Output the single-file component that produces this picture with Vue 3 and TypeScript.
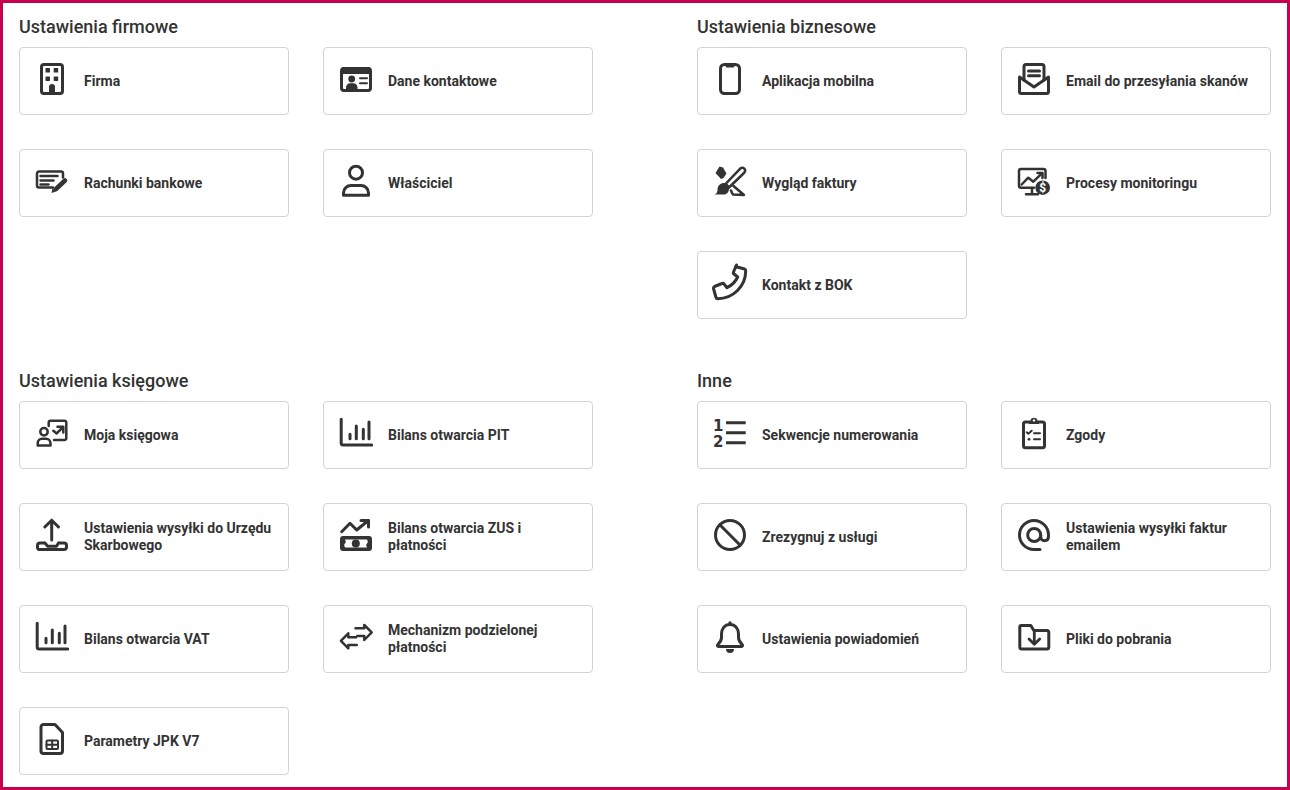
<script setup lang="ts">
interface Item { label: string; icon: string }
interface Section { title: string; items: Item[] }

const F = 'fill="currentColor" stroke="none"'
const icons: Record<string, string> = {
  firma: `<rect x="5.5" y="1.5" width="21" height="29" rx="2.5"/><g ${F}><rect x="9.5" y="5" width="4.5" height="4.5" rx=".6"/><rect x="17.7" y="5" width="4.5" height="4.5" rx=".6"/><rect x="9.5" y="13.4" width="4.5" height="4.5" rx=".6"/><rect x="17.7" y="13.4" width="4.5" height="4.5" rx=".6"/><path d="M13 31v-7a3 3 0 0 1 6 0v7z"/></g>`,
  kontakt: `<rect x="1.5" y="5.5" width="29" height="22" rx="2.5"/><path ${F} d="M1 7a3 3 0 0 1 3-3h24a3 3 0 0 1 3 3v4H1z"/><g ${F}><circle cx="11.7" cy="16" r="3.4"/><path d="M6 29v-4.5c0-2.5 2-4.2 4-4.2h3.500c2 0 4 1.700 4 4.200V29z"/></g><path stroke-width="2" d="M20 15.300h7M20 20.300h7"/>`,
  rachunki: `<path stroke-width="2.500" d="M17 22.500H3a2 2 0 0 1-2-2v-12a2 2 0 0 1 2-2h22a2 2 0 0 1 2 2v4"/><path stroke-width="2.500" d="M4.500 11h17M4.500 15.500h13M4.500 19.500h8"/><path stroke-width="4.500" d="M20 24l9-8.500"/><path ${F} d="M15.500 28l1-5 3.500 3.500z"/>`,
  osoba: `<circle cx="16" cy="7.700" r="6.500"/><path d="M3.500 30.200V28c0-4.500 3.500-7.500 7.500-7.500h10c4 0 7.500 3 7.500 7.500v2.200z"/>`,
  mobile: `<rect x="6.500" y="1.500" width="19" height="29" rx="4"/><path ${F} d="M11.500 1h9v2a1.500 1.500 0 0 1-1.500 1.500h-6A1.500 1.500 0 0 1 11.500 3z"/>`,
  email: `<path d="M6 17V3.500a2 2 0 0 1 2-2h16a2 2 0 0 1 2 2V17"/><path d="M10.500 8h11M10.500 12.700h11"/><path d="M1.500 14v14.500a2 2 0 0 0 2 2h25a2 2 0 0 0 2-2V14L16 24z"/>`,
  wyglad: `<path ${F} d="M5.500 1.500l3.500 1 3.500 6-3 4.500-2.500 1L1.500 8z"/><path stroke-width="2.500" d="M30.500 3.800c-1.500-1.500-3-1.300-4.500 0L11.500 19l3.500 3.500L30 8c1.200-1.400 1.800-2.700.500-4.200z"/><path ${F} d="M7.500 18.500c3-1 5.500-.5 7 2 1.500 3 .5 7.500-3.500 9H0.500c2.500-1 3-2.500 3-5 0-3 1.500-5 4-6z"/><path stroke-width="2.500" d="M19.500 21l10.500 9-11-.5c-.8-1-1.500-2.500-2-4"/>`,
  proces: `<path stroke-width="2.500" d="M16 22.800H3a2 2 0 0 1-2-2V6a2 2 0 0 1 2-2h22.500a2 2 0 0 1 2 2v7"/><path stroke-width="2.500" d="M14 23v6M8 29.200h12"/><path stroke-width="2.500" d="M3.700 19.500l6.600-6.800 5 4 8.400-8"/><path stroke-width="2.500" d="M19.500 8h5v5"/><circle ${F} cx="24.700" cy="22.700" r="7.300"/><text x="24.700" y="27" text-anchor="middle" fill="#fff" stroke="none" font-family="Roboto" font-weight="700" font-size="12">$</text>`,
  telefon: `<path d="M21.500-.5L30.500 2c.8.300 1.200 1 1.200 1.700 0 15.500-12.500 28-28 28-.8 0-1.500-.5-1.700-1.200L-.500 21.500c-.2-.8.200-1.600 1-2l7.500-3c.7-.3 1.500-.1 2 .5l3 3.700c4.800-2.300 8.500-6 10.700-10.700L20 7c-.6-.5-.8-1.300-.5-2l3-7"/>`,
  ksiegowa: `<path stroke-width="2.500" d="M12.700 9V5.500a1.800 1.800 0 0 1 1.800-1.800h14a1.800 1.800 0 0 1 1.800 1.800v15.700a1.800 1.800 0 0 1-1.800 1.800H18"/><circle stroke-width="2.500" cx="8" cy="14.700" r="3.700"/><path stroke-width="2.500" d="M1.700 28.500v-2.200c0-2.500 1.800-4.600 4.300-4.600h4c2.500 0 4.500 2.100 4.500 4.600v2.200z"/><path stroke-width="2.500" d="M17.300 13.700l3.400 2.700 6.400-6.400M21.500 9.800h5.800v5.800"/>`,
  bilans: `<path d="M1.200 2.300V26a2 2 0 0 0 2 2h28.500"/><path d="M10 17.300v4.500M16.300 9v12.800M23.300 12.300v9.500M29 5v16.800"/>`,
  upload: `<path d="M15.700 21V1.500M8.800 8l6.900-6.800L22.500 8"/><path d="M9 24H4a2.500 2.500 0 0 0-2.500 2.500v2.200A2 2 0 0 0 4 30.500h24a2.500 2.500 0 0 0 2.500-2.500v-1.500A2.500 2.500 0 0 0 28 24h-5.500M9 24l2.500 3.200h9L22.500 24"/>`,
  zus: `<path stroke-width="3" d="M1.700 12.700l8.300-8.400 6.700 6.700L28.300 1.500"/><path stroke-width="3" d="M21 1.500h7.500V8"/><path ${F} d="M3 17h26a3 3 0 0 1 3 3v9a3 3 0 0 1-3 3H3a3 3 0 0 1-3-3v-9a3 3 0 0 1 3-3z"/><path stroke="none" fill="#fff" d="M5 20.500h22c.6 1.700 1.500 2.500 0 4-1.500 1.500-.6 2.300 0 4H5c-.6-1.700-1.500-2.500 0-4 1.500-1.500.6-2.300 0-4z"/><circle ${F} cx="15.800" cy="24.500" r="4"/>`,
  mechanizm: `<path stroke-width="2.500" d="M15.500 7.300h8.800V4l7.400 7.300-7.400 7.700v-4h-7"/><path stroke-width="2.500" d="M16 16.300H8.300v-4L.9 19.800l7.400 7.500V24h8.500"/>`,
  jpk: `<path d="M7.500 1.500h11.500l7.500 8V28a2.500 2.500 0 0 1-2.500 2.500H7.500A2.500 2.500 0 0 1 5 28V4a2.500 2.500 0 0 1 2.500-2.500z"/><rect stroke-width="2" x="10.500" y="17.500" width="11.500" height="8.500" rx="1"/><path stroke-width="2" d="M16.200 17.500V26M10.500 21.700H22"/>`,
  lista: `<text x="4.300" y="14" text-anchor="middle" fill="currentColor" stroke="none" font-family="DejaVu Sans" font-weight="700" font-size="15">1</text><text x="4.300" y="29.700" text-anchor="middle" fill="currentColor" stroke="none" font-family="DejaVu Sans" font-weight="700" font-size="15">2</text><path stroke-linecap="butt" d="M12 5.700h19.700M12 15.700h19.700M12 25.700h19.700"/>`,
  zakaz: `<circle cx="16" cy="16" r="14.500"/><path d="M5.800 5.800l20.400 20.400"/>`,
  dzwonek: `<path d="M16 3.500c-5.500 0-8.500 4.500-8.500 9.500v3.500c0 3-2 5.500-3.800 7.300a1 1 0 0 0 .8 1.700h23a1 1 0 0 0 .8-1.700c-1.800-1.800-3.800-4.300-3.800-7.300V13c0-5-3-9.500-8.500-9.500z"/><g ${F}><path d="M12 28h8a4 4 0 0 1-8 0z"/><circle cx="16" cy="2" r="1.700"/></g>`,
  zgody: `<path d="M11.500 5H7.500a2 2 0 0 0-2 2v21.800a2 2 0 0 0 2 2H24.500a2 2 0 0 0 2-2V7a2 2 0 0 0-2-2h-4"/><path ${F} d="M11 7V5a1.500 1.500 0 0 1 1.500-1.500c0-3.800 7-3.800 7 0A1.500 1.500 0 0 1 21 5v2z"/><circle cx="16" cy="3.400" r="1.200" fill="#fff" stroke="none"/><path stroke-width="2" d="M8.700 15.300l1.600 1.400 3.400-3"/><path stroke-width="2" d="M16 16.300h6M16 22.300h6"/><circle ${F} cx="11" cy="22.300" r="1.400"/>`,
  at: `<circle cx="16.200" cy="16" r="6.500"/><path d="M22.700 16v2c0 2.200 1.600 3.700 3.800 3.700s4-1.500 4-5V16C30.500 8 24 1.500 16 1.500S1.500 8 1.500 16 8 30.500 16 30.500h6"/>`,
  folder: `<path d="M1.800 6a1.500 1.500 0 0 1 1.500-1.500h9.500l3 5h13a2 2 0 0 1 2 2V26a2 2 0 0 1-2 2H3.800a2 2 0 0 1-2-2z"/><path stroke-width="2.800" d="M16.300 11v12M11 18l5.300 5.300 5.400-5.300"/>`
}

const sections: Section[] = [
  { title: 'Ustawienia firmowe', items: [
    { label: 'Firma', icon: 'firma' },
    { label: 'Dane kontaktowe', icon: 'kontakt' },
    { label: 'Rachunki bankowe', icon: 'rachunki' },
    { label: 'Właściciel', icon: 'osoba' }
  ] },
  { title: 'Ustawienia biznesowe', items: [
    { label: 'Aplikacja mobilna', icon: 'mobile' },
    { label: 'Email do przesyłania skanów', icon: 'email' },
    { label: 'Wygląd faktury', icon: 'wyglad' },
    { label: 'Procesy monitoringu', icon: 'proces' },
    { label: 'Kontakt z BOK', icon: 'telefon' }
  ] },
  { title: 'Ustawienia księgowe', items: [
    { label: 'Moja księgowa', icon: 'ksiegowa' },
    { label: 'Bilans otwarcia PIT', icon: 'bilans' },
    { label: 'Ustawienia wysyłki do Urzędu Skarbowego', icon: 'upload' },
    { label: 'Bilans otwarcia ZUS i płatności', icon: 'zus' },
    { label: 'Bilans otwarcia VAT', icon: 'bilans' },
    { label: 'Mechanizm podzielonej płatności', icon: 'mechanizm' },
    { label: 'Parametry JPK V7', icon: 'jpk' }
  ] },
  { title: 'Inne', items: [
    { label: 'Sekwencje numerowania', icon: 'lista' },
    { label: 'Zgody', icon: 'zgody' },
    { label: 'Zrezygnuj z usługi', icon: 'zakaz' },
    { label: 'Ustawienia wysyłki faktur emailem', icon: 'at' },
    { label: 'Ustawienia powiadomień', icon: 'dzwonek' },
    { label: 'Pliki do pobrania', icon: 'folder' }
  ] }
]
</script>

<template>
  <main class="page">
    <section v-for="s in sections" :key="s.title" class="section">
      <h2 class="title">{{ s.title }}</h2>
      <div class="cards">
        <a v-for="item in s.items" :key="item.label" class="card">
          <svg
            class="icon"
            viewBox="0 0 32 32"
            width="32"
            height="32"
            fill="none"
            stroke="currentColor"
            stroke-width="3"
            stroke-linecap="round"
            stroke-linejoin="round"
            v-html="icons[item.icon]"
          ></svg>
          <span class="label">{{ item.label }}</span>
        </a>
      </div>
    </section>
  </main>
</template>

<style>
html, body { margin: 0; background: #fff; }
</style>

<style scoped>
.page {
  box-sizing: border-box;
  width: 1290px;
  height: 790px;
  border: 3px solid #c7004f;
  padding: 13px 16px 0;
  display: grid;
  grid-template-columns: 574px 574px;
  grid-template-rows: 303px auto;
  column-gap: 104px;
  row-gap: 51px;
  background: #fff;
  font-family: Roboto, "Liberation Sans", sans-serif;
  color: #333;
  overflow: hidden;
}
.title {
  margin: 0 0 9px;
  font-size: 18px;
  line-height: 22px;
  font-weight: 500;
  color: #333;
}
.cards {
  display: grid;
  grid-template-columns: 270px 270px;
  grid-auto-rows: 68px;
  column-gap: 34px;
  row-gap: 34px;
}
.card {
  box-sizing: border-box;
  display: flex;
  align-items: center;
  gap: 16px;
  padding: 0 16px;
  background: #fff;
  border: 1px solid #d3d3d3;
  border-radius: 4px;
}
.icon {
  flex: none;
  margin-bottom: 4px;
  overflow: visible;
  color: #333;
}
.label {
  font-size: 14px;
  line-height: 17px;
  font-weight: 700;
  color: #333;
}
</style>
